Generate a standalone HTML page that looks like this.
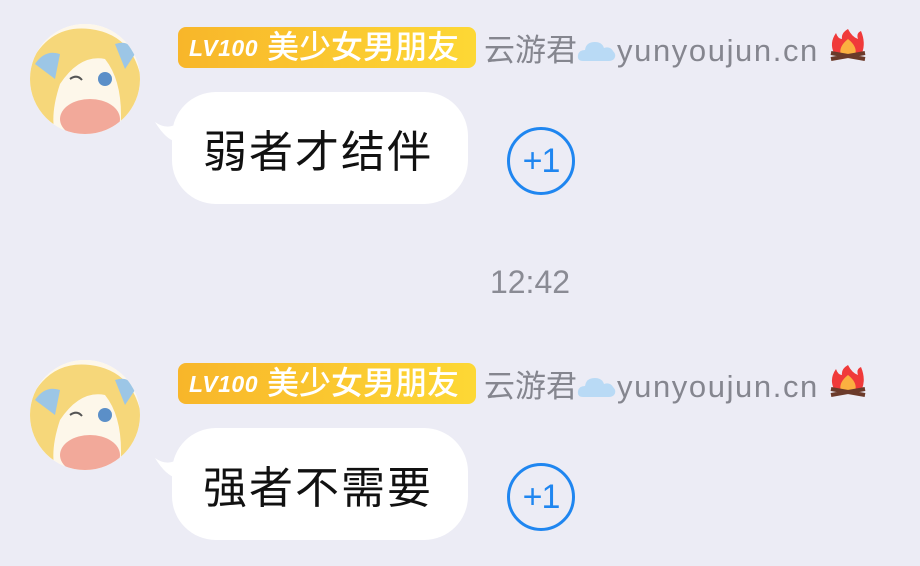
<!DOCTYPE html>
<html><head><meta charset="utf-8"><style>
body{margin:0;width:920px;height:566px;background:#ececf5;position:relative;overflow:hidden;font-family:"Liberation Sans","Noto Sans CJK SC",sans-serif}
.blk{position:absolute;left:0;width:920px;height:200px}
.av{position:absolute;left:30px;top:24px;width:110px;height:110px;border-radius:50%;overflow:hidden;background:#fff}
.badge{position:absolute;left:178px;top:27px;width:298px;height:41px;border-radius:8px;background:linear-gradient(90deg,#f8b62a,#fdd835);color:#fff;font-size:32px;line-height:40px;white-space:nowrap;font-weight:500}
.badge i{font-weight:bold;font-size:23px;margin-left:11px;margin-right:9px;letter-spacing:0.5px;vertical-align:2px}
.name{position:absolute;left:484px;top:27px;font-size:31px;line-height:40px;color:#85868f;white-space:nowrap}
.name svg{vertical-align:-4px}
.lat{letter-spacing:1.6px}
.bub{position:absolute;left:172px;top:92px;width:296px;height:112px;border-radius:44px;background:#fff}
.bub span{position:absolute;left:31px;top:35px;font-size:44px;line-height:52px;color:#111;letter-spacing:2px}
.tail{position:absolute;left:152px;top:112px}
.plus{position:absolute;left:507px;top:127px;width:62px;height:62px;border:3px solid #1f86f0;border-radius:50%;color:#1f86f0;font-size:34px;line-height:62px;text-align:center;box-sizing:content-box;letter-spacing:-1px}
.time{position:absolute;left:0;width:1060px;text-align:center;top:264px;font-size:32px;color:#8a8b94}
</style></head><body>
<div class="blk" style="top:0">
<div class="av"><svg width="110" height="110" viewBox="0 0 110 110"><rect width="110" height="110" fill="#fdf7ea"/><path d="M0 40 Q20 0 60 5 Q100 10 110 50 L110 110 L90 110 Q95 60 75 35 Q50 30 30 60 Q20 90 25 110 L0 110Z" fill="#f6d77a"/><ellipse cx="60" cy="95" rx="30" ry="20" fill="#f2a99a"/><path d="M5 40 Q15 25 30 30 L25 55Z" fill="#9cc6e6"/><path d="M85 20 Q100 15 105 30 L95 45Z" fill="#9cc6e6"/><circle cx="75" cy="55" r="7" fill="#5b8fc8"/><path d="M40 55 Q47 50 52 56" stroke="#555" stroke-width="2" fill="none"/></svg></div>
<div class="badge"><i>LV100</i>美少女男朋友</div>
<div class="name">云游君<svg width="40" height="28" viewBox="0 0 40 28"><path d="M6 24 Q0 24 1 18 Q2 13 8 13 Q9 5 18 5 Q25 5 27 11 Q33 9 36 14 Q40 18 37 22 Q35 24 32 24Z" fill="#b9daf5"/></svg><span class="lat">yunyoujun.cn</span> <svg width="40" height="38" viewBox="0 0 40 38"><path d="M20 2 Q24 10 30 12 Q28 6 33 4 Q38 16 34 26 L6 26 Q1 16 8 6 Q10 12 14 12 Q13 6 20 2Z" fill="#f03a3a"/><path d="M20 12 Q30 20 27 28 L13 28 Q10 20 20 12Z" fill="#fbb040"/><path d="M3 32 L37 26 M3 26 L37 32" stroke="#6b3a2a" stroke-width="4"/></svg></div>
<svg class="tail" width="30" height="30"><path d="M3 10 Q14 18 25 12 L25 30 Q14 28 3 10Z" fill="#fff"/></svg>
<div class="bub"><span>弱者才结伴</span></div>
<div class="plus">+1</div>
</div>
<div class="time">12:42</div>
<div class="blk" style="top:336px">
<div class="av"><svg width="110" height="110" viewBox="0 0 110 110"><rect width="110" height="110" fill="#fdf7ea"/><path d="M0 40 Q20 0 60 5 Q100 10 110 50 L110 110 L90 110 Q95 60 75 35 Q50 30 30 60 Q20 90 25 110 L0 110Z" fill="#f6d77a"/><ellipse cx="60" cy="95" rx="30" ry="20" fill="#f2a99a"/><path d="M5 40 Q15 25 30 30 L25 55Z" fill="#9cc6e6"/><path d="M85 20 Q100 15 105 30 L95 45Z" fill="#9cc6e6"/><circle cx="75" cy="55" r="7" fill="#5b8fc8"/><path d="M40 55 Q47 50 52 56" stroke="#555" stroke-width="2" fill="none"/></svg></div>
<div class="badge"><i>LV100</i>美少女男朋友</div>
<div class="name">云游君<svg width="40" height="28" viewBox="0 0 40 28"><path d="M6 24 Q0 24 1 18 Q2 13 8 13 Q9 5 18 5 Q25 5 27 11 Q33 9 36 14 Q40 18 37 22 Q35 24 32 24Z" fill="#b9daf5"/></svg><span class="lat">yunyoujun.cn</span> <svg width="40" height="38" viewBox="0 0 40 38"><path d="M20 2 Q24 10 30 12 Q28 6 33 4 Q38 16 34 26 L6 26 Q1 16 8 6 Q10 12 14 12 Q13 6 20 2Z" fill="#f03a3a"/><path d="M20 12 Q30 20 27 28 L13 28 Q10 20 20 12Z" fill="#fbb040"/><path d="M3 32 L37 26 M3 26 L37 32" stroke="#6b3a2a" stroke-width="4"/></svg></div>
<svg class="tail" width="30" height="30"><path d="M3 10 Q14 18 25 12 L25 30 Q14 28 3 10Z" fill="#fff"/></svg>
<div class="bub"><span>强者不需要</span></div>
<div class="plus">+1</div>
</div>
</body></html>
